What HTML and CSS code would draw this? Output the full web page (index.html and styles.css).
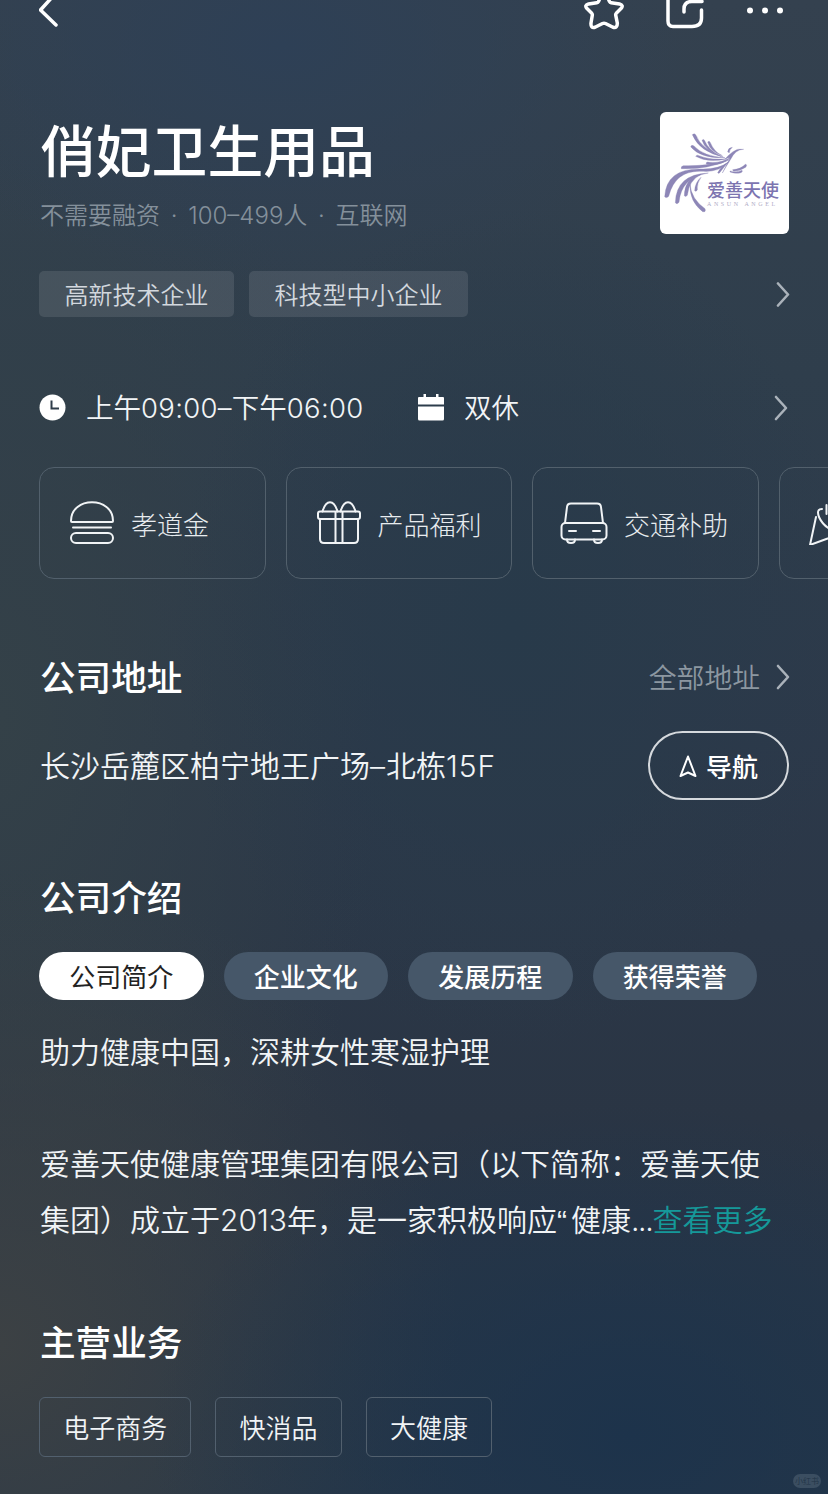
FILE: index.html
```html
<!DOCTYPE html>
<html lang="zh-CN">
<head>
    <meta charset="UTF-8">
    <meta name="viewport" content="width=device-width, initial-scale=1.0">
    <title>俏妃卫生用品</title>
    <link rel="stylesheet" href="styles.css">
</head>
<body>
<div class="page">
    <header class="topbar">
        <svg class="icon" width="24" height="34" viewBox="0 0 24 34"><path d="M16 -6 L1.5 10 L17 25"/></svg>
        <div class="topbar-actions">
            <svg class="icon" width="42" height="34" viewBox="0 0 42 34"><path d="M21 -7 Q22.800 -7 23.600 -5 L26.500 1.500 Q27 2.500 28.200 2.700 L36.500 4 Q41 5.200 38 8.600 L33.500 13 Q32.500 14 32.700 15.200 L34.300 23 Q34.500 28.500 30 27.300 L22.500 23.500 Q21 22.800 19.500 23.500 L12 27.300 Q7.500 28.500 8 23 L9.300 15.200 Q9.500 14 8.500 13 L4 8.600 Q1 5.200 5.500 4 L13.800 2.700 Q15 2.500 15.500 1.500 L18.400 -5 Q19.200 -7 21 -7Z"/></svg>
            <svg class="icon" width="40" height="34" viewBox="0 0 40 34"><path d="M18 -8 H8 Q3 -8 3 -3 V21 Q3 26.500 8 26.500 H27 Q36.500 26.500 36.500 18 V10"/><path d="M19 12 V9 Q19 1.500 27 1.500 H37"/></svg>
            <svg class="dots" width="40" height="34" viewBox="0 0 40 34"><circle cx="5" cy="10.500" r="3"/><circle cx="20" cy="10.500" r="3"/><circle cx="35" cy="10.500" r="3"/></svg>
        </div>
    </header>

    <section class="company">
        <div>
            <h1>俏妃卫生用品</h1>
            <p class="meta">不需要融资 · 100–499人 · 互联网</p>
        </div>
        <div class="logo">
            <svg width="129" height="122" viewBox="60 36 387 366">
                <g class="feathers">
                    <path d="M157 104 Q164 98 169 107 Q182 145 250 171 Q178 155 157 104Z"/>
                    <path d="M186 121 Q191 115 194 122 Q205 150 243 169 Q196 154 186 121Z"/>
                    <path d="M203 126 Q208 121 211 128 Q222 155 247 167 Q211 156 203 126Z"/>
                    <path d="M152 140 Q155 133 162 138 Q190 169 255 173 Q181 176 152 140Z"/>
                    <path d="M167 169 Q171 163 177 167 Q210 181 262 176 Q204 190 167 169Z"/>
                    <path d="M198 189 Q202 184 208 187 Q245 190 275 170 Q247 199 200 193Z"/>
                    <path d="M124 206 Q122 199 130 197 Q210 199 267 180 Q203 209 124 206Z"/>
                    <path d="M74 290 Q79 202 190 207 Q237 207 264 187 Q238 217 190 214 Q106 208 86 289 Q80 296 74 290Z"/>
                    <path d="M106 308 Q108 223 205 219 Q123 233 117 307 Q111 315 106 308Z"/>
                    <path d="M133 287 Q133 236 183 223 Q147 241 142 286 Q137 292 133 287Z"/>
                    <path d="M150 253 Q154 298 195 326 Q199 337 188 335 Q148 305 150 253Z"/>
                    <path d="M183 232 Q165 248 164 272 Q168 276 172 270 Q170 250 183 232Z"/>
                    <path d="M233 218 Q242 199 266 185 Q255 197 239 218 Q236 222 233 218Z"/>
                    <path d="M247 219 Q260 197 272 178 Q277 166 288 156 Q300 147 311 148 Q292 144 279 155 Q266 164 255 177 Q266 172 270 174 Q262 190 247 219Z"/>
                    <path d="M263 156 Q264 143 277 142 Q269 148 268 158Z"/>
                    <path d="M278 209 Q302 208 316 193 Q323 194 317 202 Q300 214 280 213Z"/>
                    <path d="M270 213 Q290 219 306 211 Q310 216 300 219 Q285 222 270 216Z"/>
                </g>
            </svg>
            <div class="logo-text">爱善天使<small>ANSUN ANGEL</small></div>
        </div>
    </section>

    <section class="honors">
        <span class="honor">高新技术企业</span>
        <span class="honor">科技型中小企业</span>
        <svg class="arrow" width="16" height="26" viewBox="0 0 16 26"><path d="M3 2.500 L13 13.500 L3 24.500"/></svg>
    </section>

    <section class="hours">
        <svg width="27" height="27" viewBox="0 0 27 27"><circle cx="13.500" cy="13.500" r="13" fill="#fff"/><path d="M12.500 6.500 V14.500 H20" fill="none" stroke="#2f3d4a" stroke-width="2"/></svg>
        <span class="hours-time">上午<span class="digits">09:00–</span>下午<span class="digits">06:00</span></span>
        <svg width="26" height="27" viewBox="0 0 26 27" fill="#fff"><path d="M0 4 Q0 3 1 3 H5.500 V0 H8 V3 H18 V0 H20.500 V3 H25 Q26 3 26 4 V10.500 H0Z"/><path d="M0 12.500 H26 V25 Q26 26.500 24.500 26.500 H1.500 Q0 26.500 0 25Z"/></svg>
        <span class="hours-rest">双休</span>
        <svg class="arrow" width="16" height="28" viewBox="0 0 16 28"><path d="M3 4 L13 15 L3 26"/></svg>
    </section>

    <section class="benefits">
        <div class="benefit">
            <svg class="line-icon" width="48" height="48" viewBox="0 0 48 48"><path d="M4 24 C4 -1 46 -1 46 24 Q46 25 45 25 H5 Q4 25 4 24Z"/><path d="M6 30.500 H44"/><rect x="4" y="36" width="42" height="10" rx="5"/></svg>
            <span>孝道金</span>
        </div>
        <div class="benefit">
            <svg class="line-icon" width="48" height="48" viewBox="0 0 48 48"><rect x="4" y="14.500" width="42" height="7.500" rx="2"/><path d="M6 22 V42 Q6 46 10 46 H40 Q44 46 44 42 V22"/><path d="M21.500 15 V46 M28.500 15 V46"/><path d="M8.500 14.500 C12 2 20 2 23.500 14.500 M26.500 14.500 C30 2 38 2 41.500 14.500"/></svg>
            <span>产品福利</span>
        </div>
        <div class="benefit">
            <svg class="line-icon" width="48" height="48" viewBox="0 0 48 48"><path d="M5 26 L7 10 Q7.300 6.500 11 6.500 H37 Q40.700 6.500 41 10 L43 26"/><rect x="1.500" y="26" width="45" height="16.500" rx="4"/><path d="M9 34 H16 M33 34 H40"/><path d="M7 42.500 Q7 46 11 46 Q15 46 15 42.500 M34 42.500 Q34 46 38 46 Q42 46 42 42.500"/></svg>
            <span>交通补助</span>
        </div>
        <div class="benefit">
            <svg class="line-icon" width="48" height="48" viewBox="0 0 48 48"><path d="M9 20 L3 48 L30 38"/><path d="M15 12 Q9 12 12 20 Q16 29 25 33"/><path d="M19.500 8 V17"/></svg>
        </div>
    </section>

    <section class="address">
        <div class="section-head">
            <h2>公司地址</h2>
            <div class="more">
                全部地址
                <svg class="arrow" width="16" height="26" viewBox="0 0 16 26"><path d="M3 2 L13 13 L3 24"/></svg>
            </div>
        </div>
        <div class="address-row">
            <span>长沙岳麓区柏宁地王广场<span class="digits">–</span>北栋<span class="digits">15F</span></span>
            <button type="button" class="nav-button">
                <svg width="18" height="23" viewBox="0 0 18 23"><path d="M9 1.500 L16.500 21 L9 17.500 L1.500 21Z"/></svg>
                导航
            </button>
        </div>
    </section>

    <section class="intro">
        <h2>公司介绍</h2>
        <div class="tabs">
            <button type="button" class="tab active">公司简介</button>
            <button type="button" class="tab">企业文化</button>
            <button type="button" class="tab">发展历程</button>
            <button type="button" class="tab">获得荣誉</button>
        </div>
        <div class="intro-text">
            <p>助力健康中国，深耕女性寒湿护理</p>
            <p>爱善天使健康管理集团有限公司（以下简称：爱善天使<br>集团）成立于2013年，是一家积极响应<span class="quote">“</span>健康<span class="ellipsis">...</span><a class="read-more">查看更多</a></p>
        </div>
    </section>

    <section class="business">
        <h2>主营业务</h2>
        <div class="business-list">
            <span>电子商务</span>
            <span>快消品</span>
            <span>大健康</span>
        </div>
    </section>
    <span class="watermark">小红书</span>
</div>
</body>
</html>
```
FILE: styles.css
```css
* {
    box-sizing: border-box;
}

body {
    margin: 0;
    font-family: Inter, "Noto Sans CJK SC DemiLight", "Noto Sans CJK SC", sans-serif;
    font-weight: 350;
    color: #f1f4f6;
    background-color: #2d3b4a;
}

h1, h2, p {
    margin: 0;
}

h1, h2, .tab, .nav-button, .benefit, .logo-text {
    font-family: Inter, "Noto Sans CJK SC", sans-serif;
}

svg {
    display: block;
    flex-shrink: 0;
}

.page {
    position: relative;
    height: 1494px;
    padding: 0 39px;
    overflow: hidden;
    background:
        radial-gradient(ellipse 480px 330px at 76% 96%, #1d334b 0%, rgba(29, 51, 75, 0) 100%),
        radial-gradient(ellipse 460px 480px at 0% 90%, #3c4144 0%, rgba(60, 65, 68, 0) 100%),
        radial-gradient(ellipse 400px 240px at 34% 3%, #2e4056 0%, rgba(46, 64, 86, 0) 100%),
        radial-gradient(ellipse 340px 420px at 62% 42%, #283a4a 0%, rgba(40, 58, 74, 0) 100%),
        radial-gradient(ellipse 380px 700px at 0% 48%, #344148 0%, rgba(52, 65, 72, 0) 100%),
        linear-gradient(180deg, #34414f 0%, #2f3e4c 25%, #2c394a 50%, #2a3544 75%, #263749 100%);
}

.topbar {
    display: flex;
    justify-content: space-between;
    height: 112px;
}

.topbar-actions {
    display: flex;
    gap: 40px;
    margin-right: 4px;
}

.icon {
    fill: none;
    stroke: #fff;
    stroke-width: 3.5;
    stroke-linecap: round;
    stroke-linejoin: round;
}

.dots {
    fill: #fff;
}

.digits {
    letter-spacing: 0.015em;
}

.company {
    display: flex;
    justify-content: space-between;
    height: 159px;
}

h1 {
    height: 80px;
    padding-left: 1px;
    font-size: 55.800px;
    font-weight: 500;
    line-height: 80px;
    color: #fff;
}

.meta {
    margin-top: 7px;
    padding-left: 1px;
    font-size: 24px;
    line-height: 34px;
    word-spacing: 4px;
    color: #84909b;
}

.logo {
    position: relative;
    width: 129px;
    height: 122px;
    border-radius: 6px;
    background-color: #fff;
    overflow: hidden;
}

.feathers {
    fill: #8d86b7;
    stroke: #8d86b7;
    stroke-width: 1;
}

.logo-text {
    position: absolute;
    left: 47px;
    top: 68px;
    font-size: 18px;
    font-weight: 500;
    line-height: 22px;
    color: #7c74b0;
}

.logo-text small {
    display: block;
    font-family: "Liberation Serif", serif;
    font-size: 6px;
    font-weight: 400;
    line-height: 4px;
    letter-spacing: 2.600px;
    color: #b0abc6;
    white-space: nowrap;
}

.arrow {
    margin-left: auto;
    fill: none;
    stroke: #aab2ba;
    stroke-width: 2.6;
    stroke-linecap: round;
    stroke-linejoin: round;
}

.honors {
    display: flex;
    align-items: center;
    gap: 15px;
    height: 46px;
    margin-right: -2px;
}

.honor {
    height: 46px;
    padding: 0 25.500px;
    border-radius: 5px;
    background-color: rgba(255, 255, 255, 0.1);
    font-size: 24px;
    line-height: 49px;
    color: #d3d8de;
}

.hours {
    display: flex;
    align-items: center;
    height: 40px;
    margin-top: 70px;
    font-size: 27.500px;
}

.hours-time {
    width: 332px;
    margin: -2px 0 0 20px;
}

.hours-time .digits {
    letter-spacing: 0.3px;
}

.hours-rest {
    margin: -2px 0 0 20px;
}

.benefits {
    display: flex;
    gap: 20px;
    margin-top: 40px;
}

.benefit {
    display: flex;
    flex: 0 0 226.500px;
    align-items: center;
    gap: 16px;
    height: 112px;
    padding-left: 27px;
    border: 1px solid #52606c;
    border-radius: 15px;
    font-size: 26px;
    font-weight: 300;
    color: #e8ecef;
}

.line-icon {
    margin-bottom: 4px;
    fill: none;
    stroke: #f1f4f6;
    stroke-width: 2;
    stroke-linecap: round;
    stroke-linejoin: round;
}

h2 {
    padding-left: 1px;
    font-size: 35.600px;
    font-weight: 500;
    line-height: 50px;
    color: #fff;
}

.address {
    margin-top: 75px;
}

.section-head {
    display: flex;
    justify-content: space-between;
    height: 50px;
    margin-right: -2px;
}

.more {
    display: flex;
    align-items: center;
    gap: 15px;
    margin-top: -6px;
    font-size: 27.800px;
    color: #8c97a1;
}

.more .arrow {
    margin-top: 2px;
}

.address-row {
    display: flex;
    align-items: center;
    justify-content: space-between;
    margin-top: 27px;
    padding-left: 1px;
    font-size: 30px;
}

.address-row > span {
    margin-top: -3px;
}

.address-row .digits {
    letter-spacing: 1px;
}

.nav-button {
    display: flex;
    align-items: center;
    justify-content: center;
    gap: 9px;
    width: 141px;
    height: 69px;
    padding: 0;
    border: 2px solid #d5d9dd;
    border-radius: 35px;
    background: none;
    font-size: 26px;
    font-weight: 500;
    color: #fff;
}

.nav-button svg {
    margin-top: 2px;
    fill: none;
    stroke: #fff;
    stroke-width: 2;
    stroke-linejoin: round;
}

.intro {
    margin-top: 74px;
}

.tabs {
    display: flex;
    gap: 20px;
    margin-top: 28px;
}

.tab {
    width: 164.500px;
    height: 48px;
    padding: 0 0 2px;
    border: none;
    border-radius: 24px;
    background-color: #465769;
    font-size: 26px;
    font-weight: 500;
    color: #fff;
}

.tab.active {
    background-color: #fff;
    font-weight: 400;
    color: #222;
}

.intro-text {
    margin-top: 24px;
    padding-left: 1px;
    font-size: 30px;
    line-height: 56px;
    white-space: nowrap;
}

.intro-text p + p {
    margin-top: 56px;
}

.quote {
    font-family: "Liberation Sans", Arial, sans-serif;
    letter-spacing: 4px;
}

.ellipsis {
    letter-spacing: -1.300px;
}

.read-more {
    color: #15999a;
}

.business {
    margin-top: 70px;
}

.business-list {
    display: flex;
    gap: 24px;
    margin-top: 28px;
}

.business-list span {
    height: 60px;
    padding: 0 23.200px;
    border: 1px solid #52606e;
    border-radius: 6px;
    font-size: 26px;
    line-height: 61px;
}

.watermark {
    position: absolute;
    right: 7px;
    bottom: 6px;
    width: 28px;
    border-radius: 7px;
    background-color: #3b4e61;
    font-size: 8px;
    font-weight: 500;
    line-height: 14px;
    text-align: center;
    color: #223447;
}
```
